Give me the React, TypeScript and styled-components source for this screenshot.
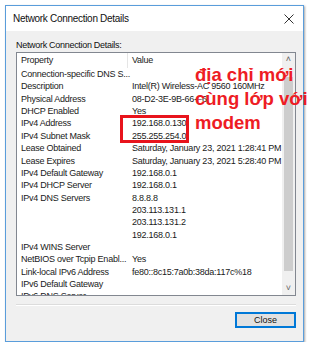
import React from "react";
import styled, { createGlobalStyle } from "styled-components";

const rows: [string, string][] = [
  ["Connection-specific DNS S...", ""],
  ["Description", "Intel(R) Wireless-AC 9560 160MHz"],
  ["Physical Address", "08-D2-3E-9B-66-F6"],
  ["DHCP Enabled", "Yes"],
  ["IPv4 Address", "192.168.0.130"],
  ["IPv4 Subnet Mask", "255.255.254.0"],
  ["Lease Obtained", "Saturday, January 23, 2021 1:28:41 PM"],
  ["Lease Expires", "Saturday, January 23, 2021 5:28:40 PM"],
  ["IPv4 Default Gateway", "192.168.0.1"],
  ["IPv4 DHCP Server", "192.168.0.1"],
  ["IPv4 DNS Servers", "8.8.8.8"],
  ["", "203.113.131.1"],
  ["", "203.113.131.2"],
  ["", "192.168.0.1"],
  ["IPv4 WINS Server", ""],
  ["NetBIOS over Tcpip Enabl...", "Yes"],
  ["Link-local IPv6 Address", "fe80::8c15:7a0b:38da:117c%18"],
  ["IPv6 Default Gateway", ""],
  ["IPv6 DNS Server", ""],
];

const App = () => {
  return (
    <Page>
      <Global />
      <Window>
        <TitleBar>
          <Title>Network Connection Details</Title>
          <CloseX width="10" height="10" viewBox="0 0 10 10">
            <path d="M0.5 0.5 L9.5 9.5 M9.5 0.5 L0.5 9.5" stroke="#333" strokeWidth="1" />
          </CloseX>
        </TitleBar>
        <Body>
          <Label>Network Connection Details:</Label>
          <ListBox>
            <ListArea>
              <Header>
                <HeadCell>Property</HeadCell>
                <HeadCell $divider>Value</HeadCell>
              </Header>
              {rows.map(([p, v], i) => (
                <Row key={i}>
                  <Cell>{p}</Cell>
                  <Cell>{v}</Cell>
                </Row>
              ))}
            </ListArea>
            <ScrollBar>
              <Arrow>&#708;</Arrow>
              <Track>
                <Thumb />
              </Track>
              <Arrow>&#709;</Arrow>
            </ScrollBar>
          </ListBox>
          <Separator />
          <Footer>
            <Button>Close</Button>
          </Footer>
          <Highlight />
          <Note>
            địa chỉ mới
            <br />
            cùng lớp với
            <br />
            modem
          </Note>
        </Body>
      </Window>
    </Page>
  );
};

export default App;

const Global = createGlobalStyle`
  body {
    margin: 0;
    background: #ffffff;
    font-family: "Liberation Sans", Arial, sans-serif;
  }
`;

const Page = styled.div`
  padding: 5px 0 0 5px;
`;

const Window = styled.div`
  width: 297px;
  height: 335px;
  border: 1px solid #5a9ddb;
  box-shadow: 1px 1px 2px rgba(0, 0, 0, 0.35);
  display: flex;
  flex-direction: column;
  background: #f0f0f0;
`;

const TitleBar = styled.div`
  height: 25px;
  background: #ffffff;
  display: flex;
  align-items: center;
  justify-content: space-between;
  padding: 0 9px 0 7px;
`;

const Title = styled.div`
  font-size: 10px;
  letter-spacing: -0.3px;
  color: #111;
`;

const CloseX = styled.svg`
  display: block;
`;

const Body = styled.div`
  position: relative;
  flex: 1;
  padding: 8px 7px 0 10px;
  display: flex;
  flex-direction: column;
`;

const Label = styled.div`
  font-size: 9px;
  letter-spacing: -0.3px;
  line-height: 12px;
  height: 12px;
  margin-bottom: 1px;
  color: #111;
`;

const ListBox = styled.div`
  height: 242px;
  border: 1px solid #828790;
  background: #ffffff;
  display: flex;
  overflow: hidden;
`;

const ListArea = styled.div`
  flex: 1;
  overflow: hidden;
`;

const Header = styled.div`
  display: grid;
  grid-template-columns: 110px 1fr;
  height: 15px;
`;

const HeadCell = styled.div<{ $divider?: boolean }>`
  font-size: 9px;
  letter-spacing: -0.25px;
  line-height: 15px;
  padding-left: 4px;
  color: #222;
  border-left: ${(p) => (p.$divider ? "1px solid #e5e5e5" : "none")};
`;

const Row = styled.div`
  display: grid;
  grid-template-columns: 111px 1fr;
  height: 12.36px;
`;

const Cell = styled.div`
  font-size: 9px;
  letter-spacing: -0.25px;
  line-height: 12.36px;
  padding-left: 4px;
  white-space: nowrap;
  color: #1a1a1a;
`;

const ScrollBar = styled.div`
  width: 13px;
  background: #f0f0f0;
  display: flex;
  flex-direction: column;
`;

const Arrow = styled.div`
  height: 13px;
  font-size: 9px;
  line-height: 13px;
  text-align: center;
  color: #606060;
`;

const Track = styled.div`
  flex: 1;
  padding: 11px 2px 11px;
  display: flex;
`;

const Thumb = styled.div`
  flex: 1;
  background: #cdcdcd;
`;

const Separator = styled.div`
  margin-top: 8px;
  height: 1px;
  background: #dcdcdc;
  border-bottom: 1px solid #ffffff;
`;

const Footer = styled.div`
  display: flex;
  justify-content: flex-end;
  padding-top: 6px;
`;

const Button = styled.div`
  width: 59px;
  height: 14px;
  border: 1px solid #0078d7;
  box-shadow: inset 0 0 0 1px #0078d7;
  background: #e1e1e1;
  font-size: 9px;
  line-height: 14px;
  text-align: center;
  color: #111;
`;

const Highlight = styled.div`
  position: absolute;
  left: 114px;
  top: 84px;
  width: 63px;
  height: 22px;
  border: 3px solid #e8141c;
`;

const Note = styled.div`
  position: absolute;
  left: 189px;
  top: 32px;
  font-size: 18.5px;
  font-weight: bold;
  line-height: 24px;
  color: #ee1c24;
  white-space: nowrap;
`;
